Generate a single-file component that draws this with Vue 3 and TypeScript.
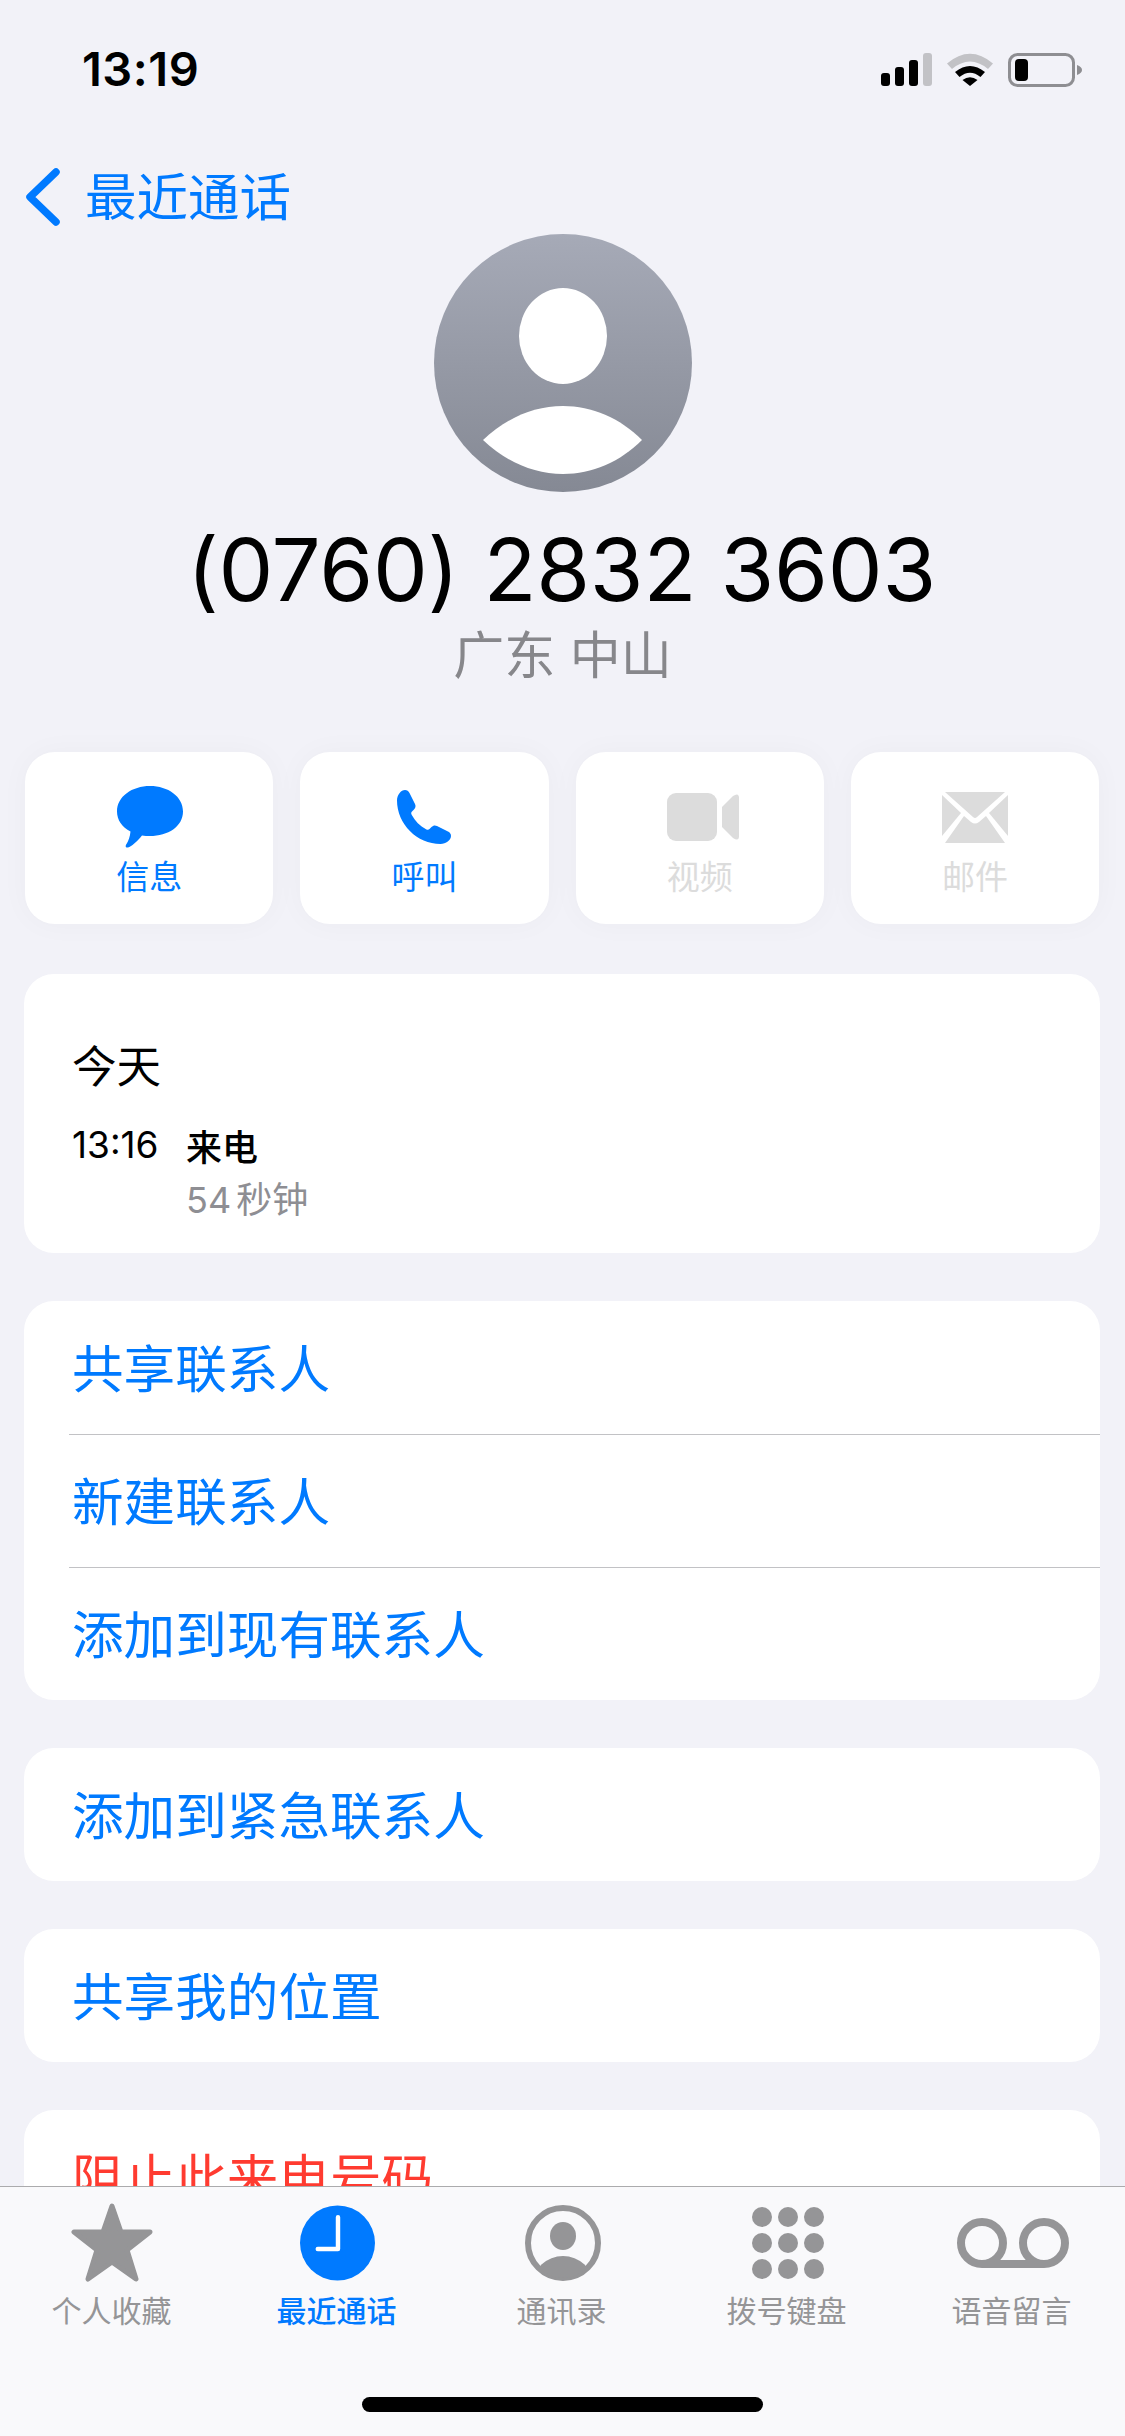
<script setup lang="ts">
const actions = [
  { key: 'message', label: '信息', active: true },
  { key: 'call', label: '呼叫', active: true },
  { key: 'video', label: '视频', active: false },
  { key: 'mail', label: '邮件', active: false }
]
const contactRows = ['共享联系人', '新建联系人', '添加到现有联系人']
const tabs = [
  { key: 'star', label: '个人收藏' },
  { key: 'recent', label: '最近通话' },
  { key: 'contacts', label: '通讯录' },
  { key: 'keypad', label: '拨号键盘' },
  { key: 'voicemail', label: '语音留言' }
]
const dots = [10, 36, 62].flatMap((cy) => [10, 36, 62].map((cx) => ({ cx, cy })))
</script>

<template>
  <div class="phone">
    <header class="status">
      <span class="clock">13:19</span>
      <div class="status-icons">
        <svg width="51" height="33" viewBox="0 0 51 33">
          <rect x="0" y="20" width="9" height="13" rx="3" fill="#000" />
          <rect x="14" y="14" width="9" height="19" rx="3" fill="#000" />
          <rect x="28" y="7" width="9" height="26" rx="3" fill="#000" />
          <rect x="42" y="0" width="9" height="33" rx="3" fill="#c2c2c6" />
        </svg>
        <svg class="wifi" width="46" height="33" viewBox="0 0 46 33">
          <path d="M0 10.5 Q23 -9 46 10.5 L41 16 Q23 1 5 16 Z" fill="#c2c2c6" />
          <path d="M8 19 Q23 7 38 19 L33.5 24 Q23 15.5 12.5 24 Z" fill="#000" />
          <path d="M15.5 27 Q23 21.500 30.500 27 L23 33 Z" fill="#000" />
        </svg>
        <svg class="battery" width="74" height="34" viewBox="0 0 74 34">
          <rect x="1.500" y="1.500" width="64" height="31" rx="8" fill="none" stroke="#8e8e92" stroke-width="3" />
          <rect x="7" y="6" width="13" height="22" rx="4" fill="#000" />
          <path d="M69 12 Q74 14 74 17 Q74 20 69 22 Z" fill="#8e8e92" />
        </svg>
      </div>
    </header>

    <nav class="nav">
      <svg width="34" height="58" viewBox="0 0 34 58">
        <path d="M30 4 L4 29 L30 54" fill="none" stroke="#007aff" stroke-width="7.500" stroke-linecap="round" stroke-linejoin="round" />
      </svg>
      <span class="nav-title">最近通话</span>
    </nav>

    <section class="hero">
      <svg class="avatar" width="258" height="258" viewBox="0 0 258 258">
        <defs>
          <linearGradient id="avatarFill" x1="0" y1="0" x2="0" y2="1">
            <stop offset="0" stop-color="#a6aab7" />
            <stop offset="1" stop-color="#858994" />
          </linearGradient>
        </defs>
        <circle cx="129" cy="129" r="129" fill="url(#avatarFill)" />
        <ellipse cx="129" cy="102" rx="44" ry="48" fill="#fff" />
        <path d="M49 206 C72 184 100 172 129 172 C158 172 186 184 208 206 C186 228 158 240 129 240 C100 240 72 228 49 206 Z" fill="#fff" />
      </svg>
      <h1 class="number">(0760) 2832 3603</h1>
      <p class="place">广东 中山</p>
    </section>

    <section class="actions">
      <div v-for="a in actions" :key="a.key" class="action" :class="{ off: !a.active }">
        <div class="action-icon">
          <svg v-if="a.key === 'message'" class="icon-message" width="66" height="62" viewBox="0 0 66 62">
            <path d="M33 0 C51 0 66 10.500 66 25.500 C66 40.500 51 50 33 50 C30 50 27.500 49.800 25 49.400 C21 54.500 14 61 10.500 61.500 C8 61.500 8.500 59.500 9.500 58 C11.500 55 13 50.500 13.500 45.500 C5 41 0 34 0 25.500 C0 10.500 15 0 33 0 Z" fill="#007aff" />
          </svg>
          <svg v-else-if="a.key === 'call'" width="54" height="54" viewBox="0 0 54 54">
            <path d="M8 0 C10 0 11.500 1 12.500 3 L18 14 C19 16 18.500 18 17 19.500 L15 21.500 C14 22.500 14 23.500 14.800 25 C18 31 23 36 29 39.200 C30.500 40 31.500 40 32.500 39 L34.500 37 C36 35.500 38 35 40 36 L51 41.500 C53 42.500 54 44 54 46 C54 50 49 54 43.500 54 C20 54 0 34 0 10.500 C0 5 4 0 8 0 Z" fill="#007aff" />
          </svg>
          <svg v-else-if="a.key === 'video'" class="icon-video" width="72" height="48" viewBox="0 0 72 48">
            <rect x="0" y="0" width="50" height="48" rx="9" fill="#dcdcdc" />
            <path d="M55 14 L66 3 Q72 -1 72 5 L72 43 Q72 49 66 45 L55 34 Z" fill="#dcdcdc" />
          </svg>
          <svg v-else width="66" height="51" viewBox="0 0 66 51">
            <path d="M3 0 L63 0 L35 25 Q33 27 31 25 Z" fill="#dcdcdc" />
            <path d="M0 3 L19 21 L0 44 Z" fill="#dcdcdc" />
            <path d="M66 3 L47 21 L66 44 Z" fill="#dcdcdc" />
            <path d="M3 51 L22 24 L29 30 Q33 33 37 30 L44 24 L63 51 Z" fill="#dcdcdc" />
          </svg>
        </div>
        <span class="action-label">{{ a.label }}</span>
      </div>
    </section>

    <section class="card today">
      <div class="today-head">今天</div>
      <div class="call-grid">
        <span class="call-time">13:16</span>
        <span class="call-type">来电</span>
        <span class="call-len">54 秒钟</span>
      </div>
    </section>

    <section class="card">
      <div v-for="row in contactRows" :key="row" class="row">
        <span>{{ row }}</span>
      </div>
    </section>

    <section class="card">
      <div class="row"><span>添加到紧急联系人</span></div>
    </section>

    <section class="card">
      <div class="row"><span>共享我的位置</span></div>
    </section>

    <section class="card">
      <div class="row danger"><span>阻止此来电号码</span></div>
    </section>

    <footer class="tabbar">
      <div v-for="t in tabs" :key="t.key" class="tab" :class="{ current: t.key === 'recent' }">
        <div class="tab-icon">
          <svg v-if="t.key === 'star'" class="icon-star" width="86" height="80" viewBox="0 0 86 80">
            <path d="M43 3 L52 29 L81 29 L58 47 L67 76 L43 59 L19 76 L28 47 L5 29 L34 29 Z" fill="#959597" stroke="#959597" stroke-width="5" stroke-linejoin="round" />
          </svg>
          <svg v-else-if="t.key === 'recent'" width="75" height="76" viewBox="0 0 76 76">
            <circle cx="38" cy="38" r="38" fill="#007aff" />
            <path d="M38.500 12 L38.500 44 L18 44" fill="none" stroke="#fff" stroke-width="4.500" stroke-linecap="round" stroke-linejoin="round" />
          </svg>
          <svg v-else-if="t.key === 'contacts'" width="76" height="76" viewBox="0 0 76 76">
            <defs>
              <clipPath id="contactClip"><circle cx="38" cy="38" r="35" /></clipPath>
            </defs>
            <circle cx="38" cy="38" r="35" fill="none" stroke="#959597" stroke-width="6" />
            <ellipse cx="38" cy="31" rx="13" ry="14" fill="#959597" />
            <ellipse cx="38" cy="79" rx="30" ry="28" fill="#959597" clip-path="url(#contactClip)" />
          </svg>
          <svg v-else-if="t.key === 'keypad'" width="72" height="72" viewBox="0 0 72 72">
            <circle v-for="(d, i) in dots" :key="i" :cx="d.cx" :cy="d.cy" r="10" fill="#959597" />
          </svg>
          <svg v-else width="114" height="52" viewBox="0 0 114 52">
            <circle cx="26" cy="26" r="21" fill="none" stroke="#959597" stroke-width="8" />
            <circle cx="88" cy="26" r="21" fill="none" stroke="#959597" stroke-width="8" />
            <path d="M26 47 L88 47" fill="none" stroke="#959597" stroke-width="8" />
          </svg>
        </div>
        <span class="tab-label">{{ t.label }}</span>
      </div>
      <div class="home-bar"></div>
    </footer>
  </div>
</template>

<style>
html,
body {
  margin: 0;
  background: #f2f2f8;
}
</style>

<style scoped>
.phone {
  position: relative;
  width: 1125px;
  height: 2436px;
  overflow: hidden;
  background: #f2f2f8;
  font-family: Inter, "Noto Sans CJK SC", sans-serif;
  color: #000;
}

.status {
  height: 154px;
  box-sizing: border-box;
  padding: 43px 43px 0 82px;
  display: flex;
  justify-content: space-between;
  align-items: flex-start;
}

.clock {
  font-size: 47px;
  line-height: 52px;
  font-weight: 600;
  letter-spacing: 0.5px;
}

.status-icons {
  display: flex;
  align-items: flex-start;
  padding-top: 10px;
}

.wifi {
  margin-left: 15px;
}

.battery {
  margin-left: 15px;
}

.nav {
  height: 80px;
  box-sizing: border-box;
  padding: 4px 0 4px 26px;
  display: flex;
  align-items: center;
}

.nav svg {
  margin-top: 6px;
}

.nav-title {
  margin-left: 25px;
  font-size: 51.5px;
  line-height: 72px;
  color: #007aff;
  font-family: "Noto Sans CJK SC", sans-serif;
}

.hero {
  display: flex;
  flex-direction: column;
  align-items: center;
}

.avatar {
  display: block;
}

.number {
  margin: 28px 2px 0 0;
  font-size: 87px;
  line-height: 100px;
  font-weight: 400;
  letter-spacing: -0.2px;
  white-space: nowrap;
}

.place {
  margin: -3px 0 3px;
  font-size: 51px;
  line-height: 70px;
  word-spacing: 3px;
  color: #87878b;
  font-family: "Noto Sans CJK SC", sans-serif;
}

.actions {
  margin: 62px 26px 50px 25px;
  display: grid;
  grid-template-columns: repeat(4, 1fr);
  gap: 27px;
}

.action {
  height: 172px;
  background: #fff;
  border-radius: 30px;
  box-shadow: 0 0 30px rgba(0, 0, 40, 0.03);
  display: flex;
  flex-direction: column;
  align-items: center;
}

.action-icon {
  margin-top: 33px;
  height: 64px;
  display: flex;
  align-items: center;
  justify-content: center;
}

.icon-message {
  transform: translateX(1px);
}

.icon-video {
  transform: translateX(3px);
}

.action-label {
  margin-top: 2px;
  font-size: 33px;
  line-height: 48px;
  color: #007aff;
  font-family: "Noto Sans CJK SC", sans-serif;
  font-weight: 400;
}

.action.off .action-label {
  color: #dcdcdc;
}

.card {
  margin: 0 25px 48px 24px;
  background: #fff;
  border-radius: 30px;
  overflow: hidden;
}

.today {
  height: 279px;
  box-sizing: border-box;
  padding: 60px 50px 0 48px;
}

.today-head {
  font-size: 44.500px;
  line-height: 60px;
  font-family: "Noto Sans CJK SC", sans-serif;
}

.call-grid {
  margin-top: 27px;
  display: grid;
  grid-template-columns: 114px 1fr;
  row-gap: 4px;
}

.call-time {
  font-size: 37px;
  line-height: 48px;
}

.call-type {
  font-size: 36px;
  line-height: 48px;
  font-weight: 500;
  font-family: "Noto Sans CJK SC", sans-serif;
}

.call-len {
  grid-column: 2;
  font-size: 36px;
  line-height: 48px;
  word-spacing: -5px;
  color: #8e8e93;
  transform: translateY(3px);
}

.row {
  height: 133px;
  box-sizing: border-box;
  padding: 0 0 5px 48px;
  display: flex;
  align-items: center;
  font-size: 51.6px;
  color: #007aff;
  font-family: "Noto Sans CJK SC", sans-serif;
  position: relative;
}

.row + .row::before {
  content: '';
  position: absolute;
  top: 0;
  left: 45px;
  right: 0;
  height: 1px;
  background: #c2c2c5;
}

.row.danger {
  color: #ff3b30;
}

.tabbar {
  position: absolute;
  left: 0;
  right: 0;
  top: 2186px;
  bottom: 0;
  background: #f9f9fb;
  border-top: 1px solid #ababad;
  display: grid;
  grid-template-columns: repeat(5, 225px);
  align-items: start;
}

.tab {
  display: flex;
  flex-direction: column;
  align-items: center;
}

.tab-icon {
  height: 80px;
  margin-top: 16px;
  display: flex;
  align-items: center;
  justify-content: center;
}

.icon-star {
  transform: translateX(-1px);
}

.tab-label {
  margin-top: 4px;
  font-size: 30px;
  line-height: 44px;
  color: #959597;
  font-family: "Noto Sans CJK SC", sans-serif;
  transform: translateX(-1px);
}

.tab.current .tab-label {
  color: #007aff;
  font-weight: 500;
}

.home-bar {
  position: absolute;
  left: 362px;
  bottom: 24px;
  width: 401px;
  height: 15px;
  border-radius: 8px;
  background: #000;
}
</style>
